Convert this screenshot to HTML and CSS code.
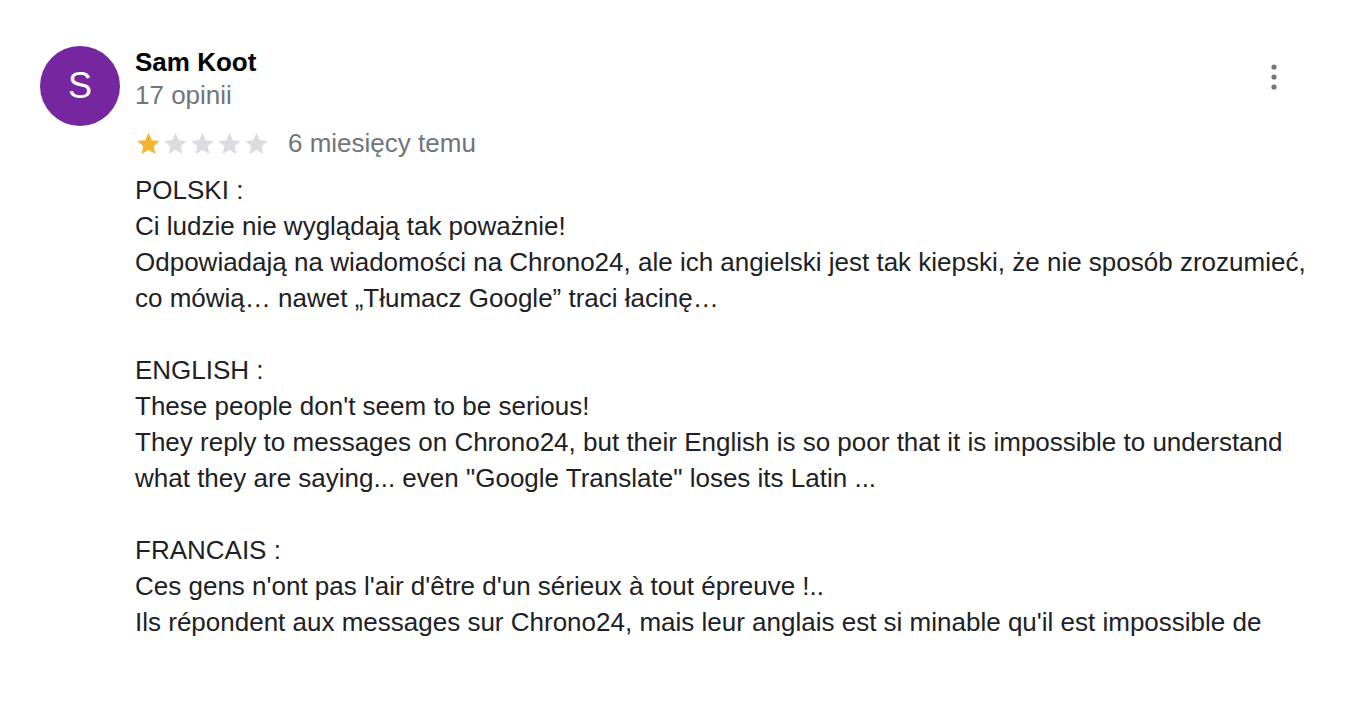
FILE: index.html
```html
<!DOCTYPE html>
<html lang="pl">
<head>
<meta charset="utf-8">
<link rel="stylesheet" href="styles.css">
</head>
<body>
<div class="review">
  <div class="avatar">S</div>
  <div class="main">
    <div class="head">
      <div class="who">
        <div class="name">Sam Koot</div>
        <div class="count">17 opinii</div>
      </div>
      <button class="menu" aria-label="Więcej">
        <svg width="24" height="30" viewBox="0 0 24 30"><circle cx="12" cy="5" r="2.6" fill="#70757a"/><circle cx="12" cy="15" r="2.6" fill="#70757a"/><circle cx="12" cy="25" r="2.6" fill="#70757a"/></svg>
      </button>
    </div>
    <div class="meta">
      <div class="stars">
        <svg class="star" viewBox="0 0 24 24"><path d="M12 2.5l2.9 6.6 7.1.6-5.4 4.7 1.6 7-6.2-3.7-6.2 3.7 1.6-7L2 9.7l7.1-.6z" fill="#f4b42f"/></svg>
        <svg class="star" viewBox="0 0 24 24"><path d="M12 2.5l2.9 6.6 7.1.6-5.4 4.7 1.6 7-6.2-3.7-6.2 3.7 1.6-7L2 9.7l7.1-.6z" fill="#dadce0"/></svg>
        <svg class="star" viewBox="0 0 24 24"><path d="M12 2.5l2.9 6.6 7.1.6-5.4 4.7 1.6 7-6.2-3.7-6.2 3.7 1.6-7L2 9.7l7.1-.6z" fill="#dadce0"/></svg>
        <svg class="star" viewBox="0 0 24 24"><path d="M12 2.5l2.9 6.6 7.1.6-5.4 4.7 1.6 7-6.2-3.7-6.2 3.7 1.6-7L2 9.7l7.1-.6z" fill="#dadce0"/></svg>
        <svg class="star" viewBox="0 0 24 24"><path d="M12 2.5l2.9 6.6 7.1.6-5.4 4.7 1.6 7-6.2-3.7-6.2 3.7 1.6-7L2 9.7l7.1-.6z" fill="#dadce0"/></svg>
      </div>
      <span class="date">6 miesięcy temu</span>
    </div>
    <div class="text">POLSKI :
Ci ludzie nie wyglądają tak poważnie!
Odpowiadają na wiadomości na Chrono24, ale ich angielski jest tak kiepski, że nie sposób zrozumieć, co mówią… nawet „Tłumacz Google” traci łacinę…

ENGLISH :
These people don't seem to be serious!
They reply to messages on Chrono24, but their English is so poor that it is impossible to understand what they are saying... even "Google Translate" loses its Latin ...

FRANCAIS :
Ces gens n'ont pas l'air d'être d'un sérieux à tout épreuve !..
Ils répondent aux messages sur Chrono24, mais leur anglais est si minable qu'il est impossible de</div>
  </div>
</div>
</body>
</html>
```
FILE: styles.css
```css
html, body {
  margin: 0;
  padding: 0;
  background: #ffffff;
  height: 702px;
  overflow: hidden;
}
body {
  font-family: "Liberation Sans", Arial, sans-serif;
  color: #202124;
}
.review {
  display: flex;
  gap: 15px;
  padding: 46px 0 0 40px;
}
.avatar {
  flex: 0 0 80px;
  width: 80px;
  height: 80px;
  border-radius: 50%;
  background: #7627a0;
  color: #ffffff;
  font-size: 36px;
  line-height: 80px;
  text-align: center;
}
.main {
  flex: 1;
  min-width: 0;
}
.head {
  display: flex;
  justify-content: space-between;
  align-items: flex-start;
  padding-right: 78px;
}
.name {
  font-weight: bold;
  font-size: 26px;
  line-height: 32px;
  color: #000000;
}
.count {
  font-size: 26px;
  line-height: 34px;
  color: #70757a;
}
.menu {
  border: 0;
  background: none;
  padding: 0;
  margin-top: 16px;
  width: 24px;
  height: 30px;
}
.meta {
  display: flex;
  align-items: center;
  gap: 18px;
  margin-top: 16px;
  height: 30px;
}
.stars {
  display: flex;
}
.star {
  width: 27px;
  height: 27px;
}
.date {
  font-size: 26px;
  color: #70757a;
}
.text {
  white-space: pre-line;
  font-size: 26px;
  line-height: 36px;
  margin-top: 14px;
  width: 1185px;
}
```
